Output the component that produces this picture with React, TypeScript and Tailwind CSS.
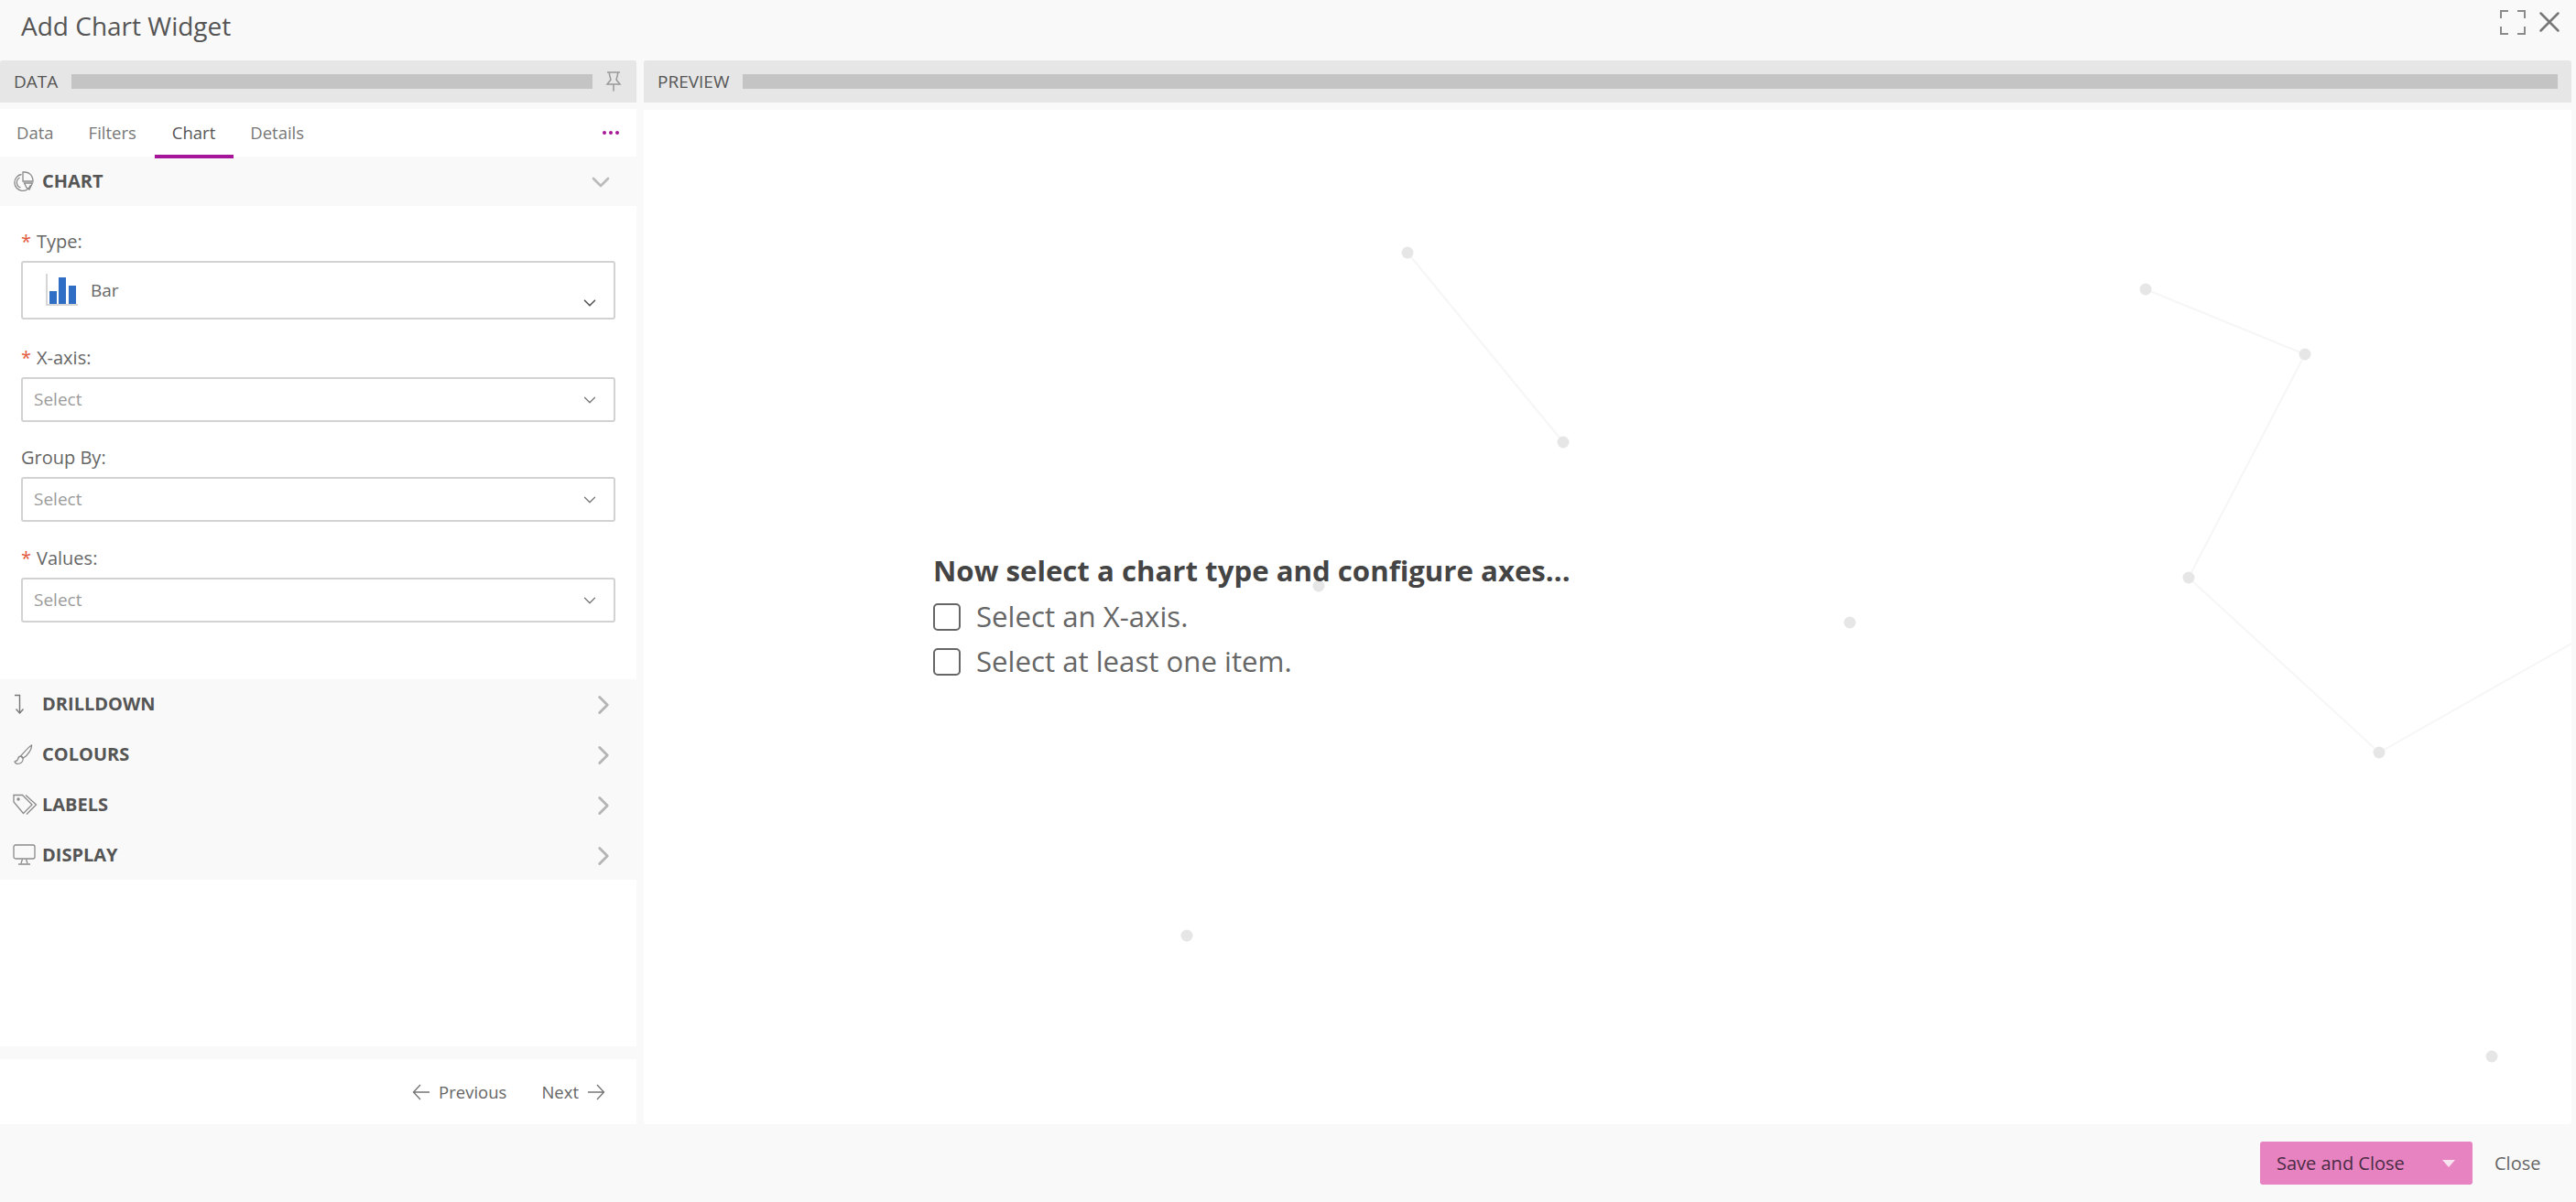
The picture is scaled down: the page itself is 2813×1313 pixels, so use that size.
import { ChevronDown, ChevronRight, X } from "lucide-react";

const font = "font-['Open_Sans',sans-serif]";

function PieIcon() {
  return (
    <svg width="24" height="23" viewBox="0 0 24 23" fill="none" stroke="#8a8a8a" strokeWidth="1.3">
      <path d="M9.5 3.5A9 9 0 1 0 19.5 15" />
      <path d="M11 1h2.5a9 9 0 0 1 8.5 8.5V11H11Z" />
      <path d="M12.5 13h9l-3.5 7-3-2Z" />
      <path d="M7.5 7a6 6 0 0 0 1 11" />
    </svg>
  );
}

function DrillIcon() {
  return (
    <svg width="24" height="23" viewBox="0 0 24 23" fill="none" stroke="#777" strokeWidth="1.4">
      <path d="M2 1.5h5.5V21" />
      <path d="M3.5 16.5l4 4.5 4-4.5" />
    </svg>
  );
}

function BrushIcon() {
  return (
    <svg width="24" height="23" viewBox="0 0 24 23" fill="none" stroke="#8a8a8a" strokeWidth="1.3">
      <path d="M20.5 1c.5 4-4 11-9 14l-2.500-2.500C13 8 17 3 20.500 1Z" />
      <path d="M9 13c-3 0-3 2-3.500 3.500C5 18 3.500 18.500 2 19c.5 2 3 3 5.500 2C10 20 11.500 17.500 11 15.500Z" />
    </svg>
  );
}

function TagsIcon() {
  return (
    <svg width="27" height="23" viewBox="0 0 27 23" fill="none" stroke="#8a8a8a" strokeWidth="1.3">
      <path d="M1 4.500V1.500h9.500L21 12 11.500 21.500 1 9Z" />
      <path d="M14 1.500 25.500 12 15 22.500" />
      <circle cx="6" cy="6" r="1" fill="#8a8a8a" />
    </svg>
  );
}

function MonitorIcon() {
  return (
    <svg width="25" height="23" viewBox="0 0 25 23" fill="none" stroke="#8a8a8a" strokeWidth="1.3">
      <rect x="1" y="1" width="23" height="15" rx="2" />
      <path d="M10.500 16.500 9 21M14.500 16.500 16 21M6 22h13" />
    </svg>
  );
}

function PinIcon() {
  return (
    <svg width="18" height="22" viewBox="0 0 18 22" fill="none" stroke="#999" strokeWidth="1.5">
      <path d="M2 1h14M4.500 1v2.500L6 9 2 14h14l-4-5 1.500-5.500V1M9 14v7.500" />
    </svg>
  );
}

function BarIcon() {
  return (
    <svg width="35" height="36" viewBox="0 0 35 36" fill="none">
      <path d="M1 0v34h34" stroke="#c9c9c9" strokeWidth="1.500" />
      <rect x="4" y="19" width="8" height="14" fill="#2f6ec4" />
      <rect x="14" y="4" width="8" height="29" fill="#2f6ec4" />
      <rect x="25" y="13" width="8" height="20" fill="#2f6ec4" />
    </svg>
  );
}

function ArrowLeftIcon() {
  return (
    <svg width="19" height="18" viewBox="0 0 19 18" fill="none" stroke="#777" strokeWidth="1.400">
      <path d="M9 1 1.500 9 9 17M1.500 9H19" />
    </svg>
  );
}

function ArrowRightIcon() {
  return (
    <svg width="19" height="18" viewBox="0 0 19 18" fill="none" stroke="#777" strokeWidth="1.400">
      <path d="M10 1l7.500 8L10 17M17.500 9H0" />
    </svg>
  );
}

function FullscreenIcon() {
  return (
    <svg width="28" height="27" viewBox="0 0 28 27" fill="none" stroke="#8a8a8a" strokeWidth="2">
      <path d="M9 1H1v8M19 1h8v8M1 18v8h8M27 18v8h-8" />
    </svg>
  );
}

function PanelBar({ title, labelClass, children }: { title: string; labelClass: string; children?: React.ReactNode }) {
  return (
    <div className="flex h-[46px] items-center rounded-t-[3px] bg-[#e6e6e6] pl-[15px]">
      <span className={`shrink-0 text-[19px] leading-none text-[#555] ${labelClass}`}>{title}</span>
      {children}
    </div>
  );
}

function Field({ label, required, children, className }: { label: string; required?: boolean; children: React.ReactNode; className?: string }) {
  return (
    <div className={className}>
      <div className="mb-[7px] flex h-[28px] items-center text-[20px] text-[#666]">
        {required && <span className="mr-[6px] text-[#e2573a]">*</span>}
        {label}
      </div>
      {children}
    </div>
  );
}

function SelectBox() {
  return (
    <div className="flex h-[49px] items-center justify-between rounded-[3px] border-2 border-[#d2d2d2] bg-white pl-[12px] pr-[15px] text-[19px] text-[#9b9b9b]">
      Select
      <ChevronDown size={22} strokeWidth={1.4} color="#777" />
    </div>
  );
}

function Section({ icon, title, open }: { icon: React.ReactNode; title: string; open?: boolean }) {
  return (
    <div className={`flex items-center pl-[14px] ${open ? "h-[54px] pr-[23px]" : "h-[54.750px] pr-[19px]"}`}>
      <span className="flex w-[32px] shrink-0">{icon}</span>
      <span className="text-[20px] font-bold text-[#555]">{title}</span>
      <span className="ml-auto mt-[2px]">
        {open ? <ChevronDown size={32} strokeWidth={2} color="#bbb" /> : <ChevronRight size={34} strokeWidth={2} color="#b5b5b5" />}
      </span>
    </div>
  );
}

function ChecklistItem({ text }: { text: string }) {
  return (
    <div className="flex h-[49px] items-center">
      <span className="mr-[17px] h-[30px] w-[30px] rounded-[5px] border-2 border-[#666] bg-white" />
      <span className="text-[31.200px] text-[#666]">{text}</span>
    </div>
  );
}

// faint network drawing behind the preview, coordinates relative to the panel
const lines = [
  [834, 156, 1004, 363],
  [1640, 196, 1814, 267],
  [1814, 267, 1687, 511],
  [1687, 511, 1895, 702],
  [1895, 702, 2105, 583],
];

const dots = [
  [834, 156],
  [1004, 363],
  [1640, 196],
  [1814, 267],
  [1687, 511],
  [1895, 702],
  [737, 520],
  [1317, 560],
  [593, 902],
  [2018, 1034],
];

export default function App() {
  return (
    <div className={`flex h-[1313px] w-full flex-col overflow-hidden bg-[#f9f9f9] ${font}`}>
      <header className="flex h-[66px] shrink-0 items-start justify-between pl-[23px] pr-[10px]">
        <h1 className="mt-[9px] text-[28px] leading-[38px] text-[#555]">Add Chart Widget</h1>
        <div className="flex items-start gap-[7px]">
          <span className="mt-[11px] flex">
            <FullscreenIcon />
          </span>
          <X size={38} strokeWidth={1.6} color="#777" className="mt-[5px]" />
        </div>
      </header>

      <main className="flex h-[1162px] shrink-0 gap-[8px] pr-[5px]">
        <section className="flex w-[695px] shrink-0 flex-col">
          <PanelBar title="DATA" labelClass="w-[63px]">
            <div className="h-[16px] w-[569px] bg-[#c4c4c4]" />
            <span className="ml-[14px]">
              <PinIcon />
            </span>
          </PanelBar>

          <nav className="mt-[7px] flex h-[52px] items-center bg-white pl-[18px] pr-[19px] text-[18.500px] text-[#777]">
            <span>Data</span>
            <span className="ml-[38px]">Filters</span>
            <span className="relative ml-[39px] text-[#555]">
              Chart
              <span className="absolute -bottom-[14px] -left-[19px] -right-[20px] h-[4px] bg-[#a6169b]" />
            </span>
            <span className="ml-[38px]">Details</span>
            <span className="ml-auto flex gap-[3px]">
              <span className="h-[4px] w-[4px] rounded-full bg-[#a6169b]" />
              <span className="h-[4px] w-[4px] rounded-full bg-[#a6169b]" />
              <span className="h-[4px] w-[4px] rounded-full bg-[#a6169b]" />
            </span>
          </nav>

          <Section icon={<PieIcon />} title="CHART" open />

          <div className="h-[517px] bg-white px-[23px] pt-[25px]">
            <Field label="Type:" required>
              <div className="relative flex h-[64px] items-center rounded-[3px] border-2 border-[#d2d2d2] pl-[25px] text-[19px] text-[#666]">
                <BarIcon />
                <span className="ml-[14px]">Bar</span>
                <ChevronDown size={22} strokeWidth={1.800} color="#555" className="absolute bottom-[5px] right-[15px]" />
              </div>
            </Field>
            <Field label="X-axis:" required className="mt-[28px]">
              <SelectBox />
            </Field>
            <Field label="Group By:" className="mt-[25px]">
              <SelectBox />
            </Field>
            <Field label="Values:" required className="mt-[26px]">
              <SelectBox />
            </Field>
          </div>

          <Section icon={<DrillIcon />} title="DRILLDOWN" />
          <Section icon={<BrushIcon />} title="COLOURS" />
          <Section icon={<TagsIcon />} title="LABELS" />
          <Section icon={<MonitorIcon />} title="DISPLAY" />

          <div className="h-[182px] bg-white" />

          <div className="mt-[14px] flex h-[71px] items-center justify-end gap-[38px] bg-white pr-[34px] text-[18.500px] text-[#666]">
            <span className="flex items-center gap-[10px]">
              <ArrowLeftIcon />
              Previous
            </span>
            <span className="flex items-center gap-[10px]">
              Next
              <ArrowRightIcon />
            </span>
          </div>
        </section>

        <section className="flex flex-1 flex-col">
          <PanelBar title="PREVIEW" labelClass="w-[93px]">
            <div className="h-[16px] w-[1982px] bg-[#c4c4c4]" />
          </PanelBar>

          <div className="relative mt-[8px] flex-1 rounded-b-[4px] bg-white pl-[316px] pt-[483px]">
            <svg className="absolute inset-0 h-full w-full" viewBox="0 0 2105 1108" fill="none">
              {lines.map(([x1, y1, x2, y2]) => (
                <line key={`${x1}-${y1}`} x1={x1} y1={y1} x2={x2} y2={y2} stroke="#f6f6f6" strokeWidth="2" />
              ))}
              {dots.map(([cx, cy]) => (
                <circle key={`${cx}-${cy}`} cx={cx} cy={cy} r="6.500" fill="#e6e6e6" />
              ))}
            </svg>
            <div className="relative">
              <div className="mb-[6px] text-[31.200px] font-bold leading-[40px] text-[#444]">Now select a chart type and configure axes...</div>
              <ChecklistItem text="Select an X-axis." />
              <ChecklistItem text="Select at least one item." />
            </div>
          </div>
        </section>
      </main>

      <footer className="flex flex-1 items-start justify-end pr-[39px] pt-[19px]">
        <div className="flex h-[47px] w-[232px] items-center rounded-[3px] bg-[#e683c0] pl-[18px] text-[20px] text-[#4a2b44]">
          <span className="w-[181px] shrink-0">Save and Close</span>
          <span className="h-0 w-0 border-x-[7.500px] border-t-[8px] border-x-transparent border-t-[#f6e3ef]" />
        </div>
        <span className="ml-[24px] mt-[9px] w-[50px] text-[20px] text-[#666]">Close</span>
      </footer>
    </div>
  );
}
